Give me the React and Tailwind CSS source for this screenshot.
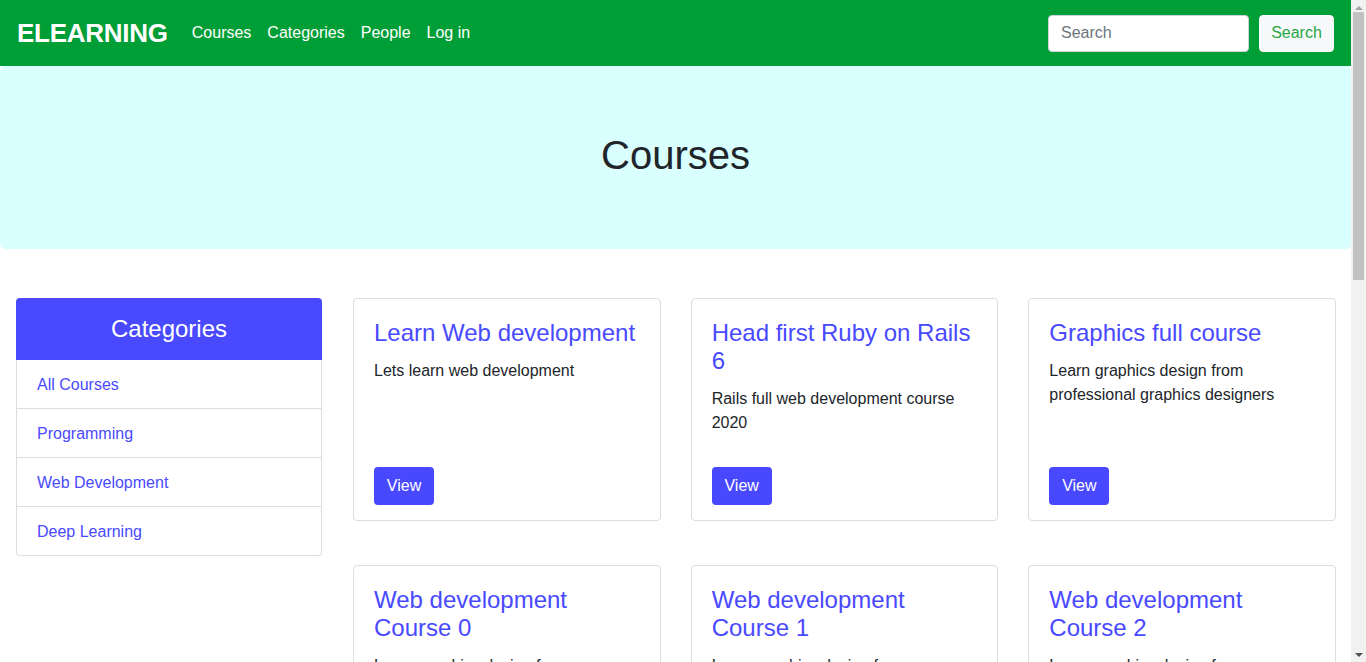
import React from 'react'

const categories = ['All Courses', 'Programming', 'Web Development', 'Deep Learning']

const courses = [
  { title: 'Learn Web development', desc: 'Lets learn web development' },
  { title: 'Head first Ruby on Rails 6', desc: 'Rails full web development course 2020' },
  { title: 'Graphics full course', desc: 'Learn graphics design from professional graphics designers' },
  ...Array.from({ length: 9 }, (_, i) => ({
    title: `Web development Course ${i}`,
    desc: 'Learn graphics design from professional graphics designers'
  }))
]

function Navbar() {
  return (
    <nav className="h-[66px] bg-[#009e36] flex items-center pl-[17px] pr-[17px]">
      <a className="text-white font-bold text-[26px] leading-none mr-[24px] tracking-[-0.01em]">ELEARNING</a>
      <ul className="flex items-center gap-[16px] text-white text-[16px]">
        <li>Courses</li>
        <li>Categories</li>
        <li>People</li>
        <li>Log in</li>
      </ul>
      <form className="ml-auto flex items-center gap-[10px]">
        <input
          type="text"
          placeholder="Search"
          className="w-[201px] h-[37px] bg-white rounded-[4px] border border-[#ced4da] px-[12px] text-[16px] text-[#495057] placeholder:text-[#6c757d] outline-none"
        />
        <button
          type="button"
          className="w-[75px] h-[37px] bg-[#f8f9fa] rounded-[4px] border border-[#f8f9fa] text-[#28a745] text-[16px]"
        >
          Search
        </button>
      </form>
    </nav>
  )
}

function Sidebar() {
  return (
    <div className="w-[306px] shrink-0">
      <div className="h-[62px] bg-[#4949ff] rounded-t-[4px] flex items-center justify-center">
        <h4 className="text-white text-[24px]">Categories</h4>
      </div>
      <ul>
        {categories.map((c, i) => (
          <li
            key={c}
            className={`h-[49px] flex items-center pl-[20px] pt-[2px] border-x border-b border-[#dddddd] text-[#4949ff] text-[16px] ${i === categories.length - 1 ? 'rounded-b-[4px]' : ''}`}
          >
            {c}
          </li>
        ))}
      </ul>
    </div>
  )
}

function CourseCard({ course }) {
  return (
    <div className="h-[223px] border border-[#dddddd] rounded-[4px] pt-[20px] px-[20px] pb-[15px] flex flex-col">
      <h5 className="text-[#4949ff] text-[24px] leading-[28px] mb-[12px]">{course.title}</h5>
      <p className="text-[#212529] text-[16px] leading-[24px]">{course.desc}</p>
      <button className="mt-auto self-start w-[60px] h-[38px] bg-[#4848ff] text-white text-[16px] rounded-[4px]">
        View
      </button>
    </div>
  )
}

function Scrollbar() {
  return (
    <div className="fixed top-0 right-0 w-[15px] h-screen bg-[#f1f1f1] flex flex-col items-center">
      <div className="h-[15px] flex items-center justify-center">
        <div className="w-0 h-0 border-x-[4px] border-x-transparent border-b-[4px] border-b-[#a3a3a3]" />
      </div>
      <div className="w-[11px] h-[268px] bg-[#c1c1c1] mt-[-3px]" />
      <div className="mt-auto h-[15px] flex items-center justify-center">
        <div className="w-0 h-0 border-x-[4px] border-x-transparent border-t-[4px] border-t-[#505050]" />
      </div>
    </div>
  )
}

export default function App() {
  return (
    <div className="min-h-screen bg-white font-['Liberation_Sans',Arial,sans-serif] text-[#212529]">
      <div className="w-[1351px]">
        <Navbar />
        <div className="h-[183px] bg-[#d9fffe] rounded-[5px] flex items-center justify-center">
          <h1 className="text-[40px] leading-[48px] text-[#212529] -mt-[6px]">Courses</h1>
        </div>
        <div className="flex pl-[16px] pr-[15px] pt-[49px] pb-[60px]">
          <Sidebar />
          <div className="ml-[31px] flex-1 grid grid-cols-3 gap-x-[30px] gap-y-[44px]">
            {courses.map((c) => (
              <CourseCard key={c.title} course={c} />
            ))}
          </div>
        </div>
      </div>
      <Scrollbar />
    </div>
  )
}
